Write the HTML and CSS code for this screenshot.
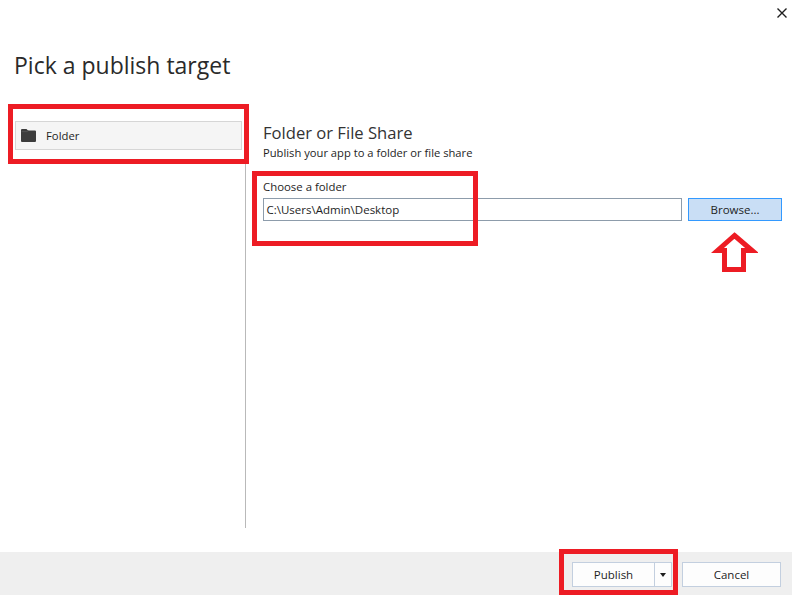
FILE: index.html
```html
<!DOCTYPE html>
<html lang="en">
<head>
<meta charset="utf-8">
<title>Pick a publish target</title>
<link rel="stylesheet" href="styles.css">
</head>
<body>
<div class="dialog">
  <header class="header">
    <button class="close" aria-label="Close">
      <svg width="10" height="10" viewBox="0 0 10 10"><path d="M0.5 0.5L9.5 9.5M9.5 0.5L0.5 9.5" stroke="#1e1e1e" stroke-width="1.4" fill="none"/></svg>
    </button>
    <h1 class="title">Pick a publish target</h1>
  </header>
  <main class="main">
    <aside class="sidebar">
      <div class="target">
        <svg class="folder-icon" width="15" height="13" viewBox="0 0 15 13"><path d="M0 1a1 1 0 0 1 1-1h4.5l1.5 1.5h7a1 1 0 0 1 1 1V12a1 1 0 0 1-1 1H1a1 1 0 0 1-1-1z" fill="#3c3c3c"/><path d="M0.5 2.6h5.7l1.3-1" stroke="#5a5a5a" stroke-width="0.7" fill="none"/></svg>
        <span>Folder</span>
      </div>
    </aside>
    <section class="content">
      <h2 class="heading">Folder or File Share</h2>
      <p class="subheading">Publish your app to a folder or file share</p>
      <label class="label">Choose a folder</label>
      <div class="field-row">
        <div class="input">C:\Users\Admin\Desktop</div>
        <button class="browse">Browse...</button>
      </div>
    </section>
  </main>
  <footer class="footer">
    <div class="split">
      <span class="split-main">Publish</span>
      <span class="split-arrow"><span class="caret"></span></span>
    </div>
    <button class="cancel">Cancel</button>
  </footer>
  <div class="mark mark-target"></div>
  <div class="mark mark-field"></div>
  <div class="mark mark-publish"></div>
  <svg class="arrow" width="47" height="41" viewBox="0 0 47 41"><path d="M23.5 3.5L41 18.5H32.5V37.5H13.5V18.5H6.5z" fill="#fff" stroke="#ed1c24" stroke-width="5" stroke-linejoin="miter"/></svg>
</div>
</body>
</html>
```
FILE: styles.css
```css
* { box-sizing: border-box; }
html, body { margin: 0; padding: 0; }
body { font-family: "Open Sans", "Noto Sans", sans-serif; color: #1e1e1e; background: #fff; }
.dialog { position: relative; width: 792px; height: 595px; display: flex; flex-direction: column; overflow: hidden; }
.header { height: 104px; padding: 49px 0 0 14px; position: relative; }
.title { margin: 0; font-size: 23px; line-height: 32px; font-weight: 400; color: #2a2a2a; }
.close { position: absolute; top: 8px; right: 5px; width: 10px; height: 10px; padding: 0; border: 0; background: none; display: flex; }
.main { flex: 1; display: flex; height: 448px; }
.sidebar { width: 246px; height: 424px; border-right: 1px solid #b9b9b9; padding: 17px 3px 0 15px; flex: none; }
.target { height: 29px; background: #f5f5f5; border: 1px solid #d6d6d6; display: flex; align-items: center; padding-left: 5px; font-size: 11.3px; gap: 10px; }
.content { flex: 1; padding: 19px 10px 0 17px; }
.heading { margin: 0; font-size: 16.6px; line-height: 20px; font-weight: 400; color: #333; }
.subheading { margin: 2px 0 0; font-size: 11.2px; line-height: 16px; }
.label { display: block; margin-top: 17px; font-size: 11.4px; line-height: 17px; }
.field-row { display: flex; gap: 6px; margin-top: 3px; }
.input { width: 419px; height: 23px; border: 1px solid #8d9cab; padding-left: 2.5px; font-size: 11.5px; line-height: 22px; }
.browse { width: 94px; height: 23px; background: #c9def5; border: 1px solid #3399ff; font: 11.5px "Open Sans", sans-serif; color: #1e1e1e; padding: 0; }
.footer { height: 43px; background: #efefef; display: flex; align-items: flex-start; padding: 10px 11px 0 572px; gap: 10px; }
.split { width: 100px; height: 25px; display: flex; background: #fdfdfd; border: 1px solid #c3cfdf; font-size: 11.5px; }
.split-main { flex: 1; text-align: center; line-height: 23px; border-right: 1px solid #c3cfdf; }
.split-arrow { width: 16px; display: flex; align-items: center; justify-content: center; }
.caret { width: 0; height: 0; border-left: 3.5px solid transparent; border-right: 3.5px solid transparent; border-top: 4px solid #1e1e1e; }
.cancel { width: 99px; height: 25px; background: #fdfdfd; border: 1px solid #c3cfdf; font: 11.5px "Open Sans", sans-serif; color: #1e1e1e; padding: 0; }
.mark { position: absolute; border: 5px solid #ed1c24; }
.mark-target { left: 8px; top: 104px; width: 241px; height: 60px; }
.mark-field { left: 252px; top: 171px; width: 226px; height: 75px; }
.mark-publish { left: 559px; top: 549px; width: 119px; height: 46px; }
.arrow { position: absolute; left: 711px; top: 232px; }
```
